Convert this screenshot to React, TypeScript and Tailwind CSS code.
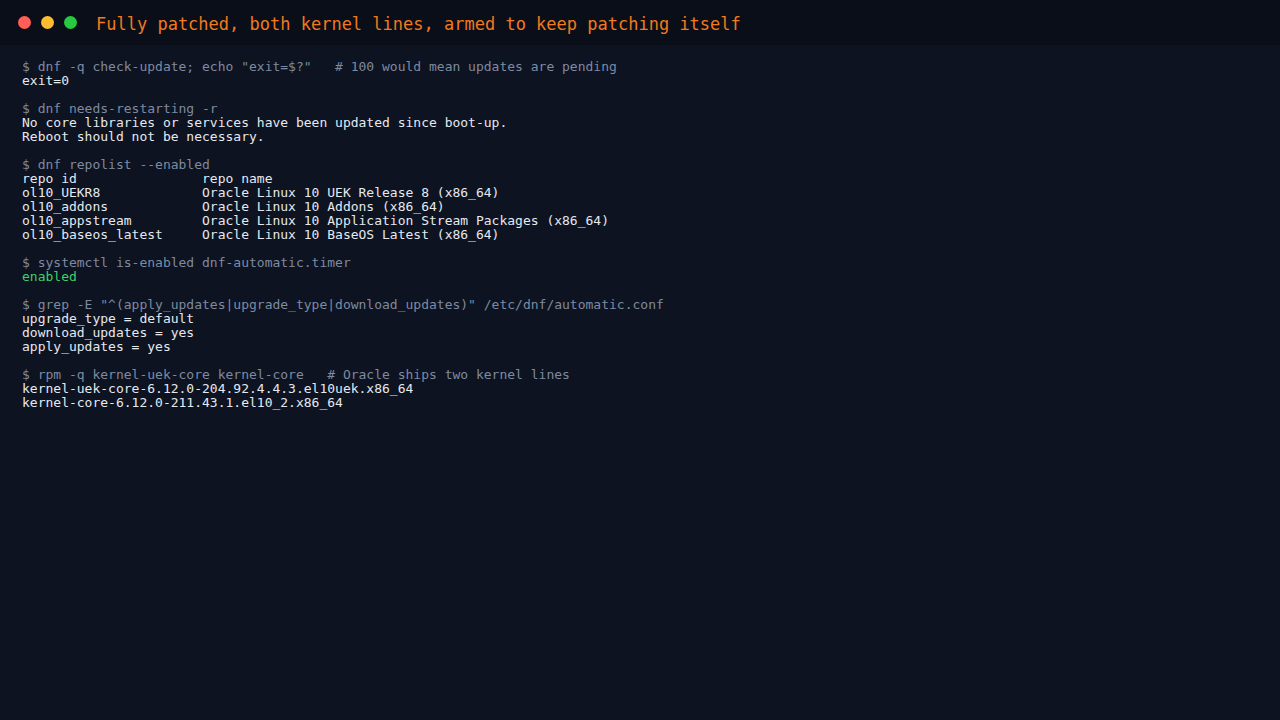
import React from "react";

type Line = { t: string; k: "cmd" | "out" | "ok" | "blank" };

const lines: Line[] = [
  { t: '$ dnf -q check-update; echo "exit=$?"   # 100 would mean updates are pending', k: "cmd" },
  { t: "exit=0", k: "out" },
  { t: "", k: "blank" },
  { t: "$ dnf needs-restarting -r", k: "cmd" },
  { t: "No core libraries or services have been updated since boot-up.", k: "out" },
  { t: "Reboot should not be necessary.", k: "out" },
  { t: "", k: "blank" },
  { t: "$ dnf repolist --enabled", k: "cmd" },
  { t: "repo id                repo name", k: "out" },
  { t: "ol10_UEKR8             Oracle Linux 10 UEK Release 8 (x86_64)", k: "out" },
  { t: "ol10_addons            Oracle Linux 10 Addons (x86_64)", k: "out" },
  { t: "ol10_appstream         Oracle Linux 10 Application Stream Packages (x86_64)", k: "out" },
  { t: "ol10_baseos_latest     Oracle Linux 10 BaseOS Latest (x86_64)", k: "out" },
  { t: "", k: "blank" },
  { t: "$ systemctl is-enabled dnf-automatic.timer", k: "cmd" },
  { t: "enabled", k: "ok" },
  { t: "", k: "blank" },
  { t: '$ grep -E "^(apply_updates|upgrade_type|download_updates)" /etc/dnf/automatic.conf', k: "cmd" },
  { t: "upgrade_type = default", k: "out" },
  { t: "download_updates = yes", k: "out" },
  { t: "apply_updates = yes", k: "out" },
  { t: "", k: "blank" },
  { t: "$ rpm -q kernel-uek-core kernel-core   # Oracle ships two kernel lines", k: "cmd" },
  { t: "kernel-uek-core-6.12.0-204.92.4.4.3.el10uek.x86_64", k: "out" },
  { t: "kernel-core-6.12.0-211.43.1.el10_2.x86_64", k: "out" },
];

const color: Record<Line["k"], string> = {
  cmd: "text-[#7e8aa0]",
  out: "text-[#e5e9f0]",
  ok: "text-[#3fcf6a]",
  blank: "",
};

export default function App() {
  return (
    <div
      className="w-[1280px] h-[720px] bg-[#0d1320] flex flex-col overflow-hidden"
      style={{ fontFamily: '"DejaVu Sans Mono", "Liberation Mono", monospace' }}
    >
      <div className="h-[45px] shrink-0 bg-[#0a0e18] flex items-center pl-[18px]">
        <div className="flex items-center gap-[10px] -mt-[1px]">
          <span className="w-[13px] h-[13px] rounded-full bg-[#ff5f57]" />
          <span className="w-[13px] h-[13px] rounded-full bg-[#febc2e]" />
          <span className="w-[13px] h-[13px] rounded-full bg-[#28c840]" />
        </div>
        <div className="ml-[19px] text-[17px] leading-[20px] text-[#f07a1e] whitespace-pre mt-[3px]">
          Fully patched, both kernel lines, armed to keep patching itself
        </div>
      </div>
      <div className="pt-[15px] pl-[22px] text-[13px] leading-[14px] whitespace-pre">
        {lines.map((l, i) => (
          <div key={i} className={`h-[14px] ${color[l.k]}`}>
            {l.t}
          </div>
        ))}
      </div>
    </div>
  );
}
